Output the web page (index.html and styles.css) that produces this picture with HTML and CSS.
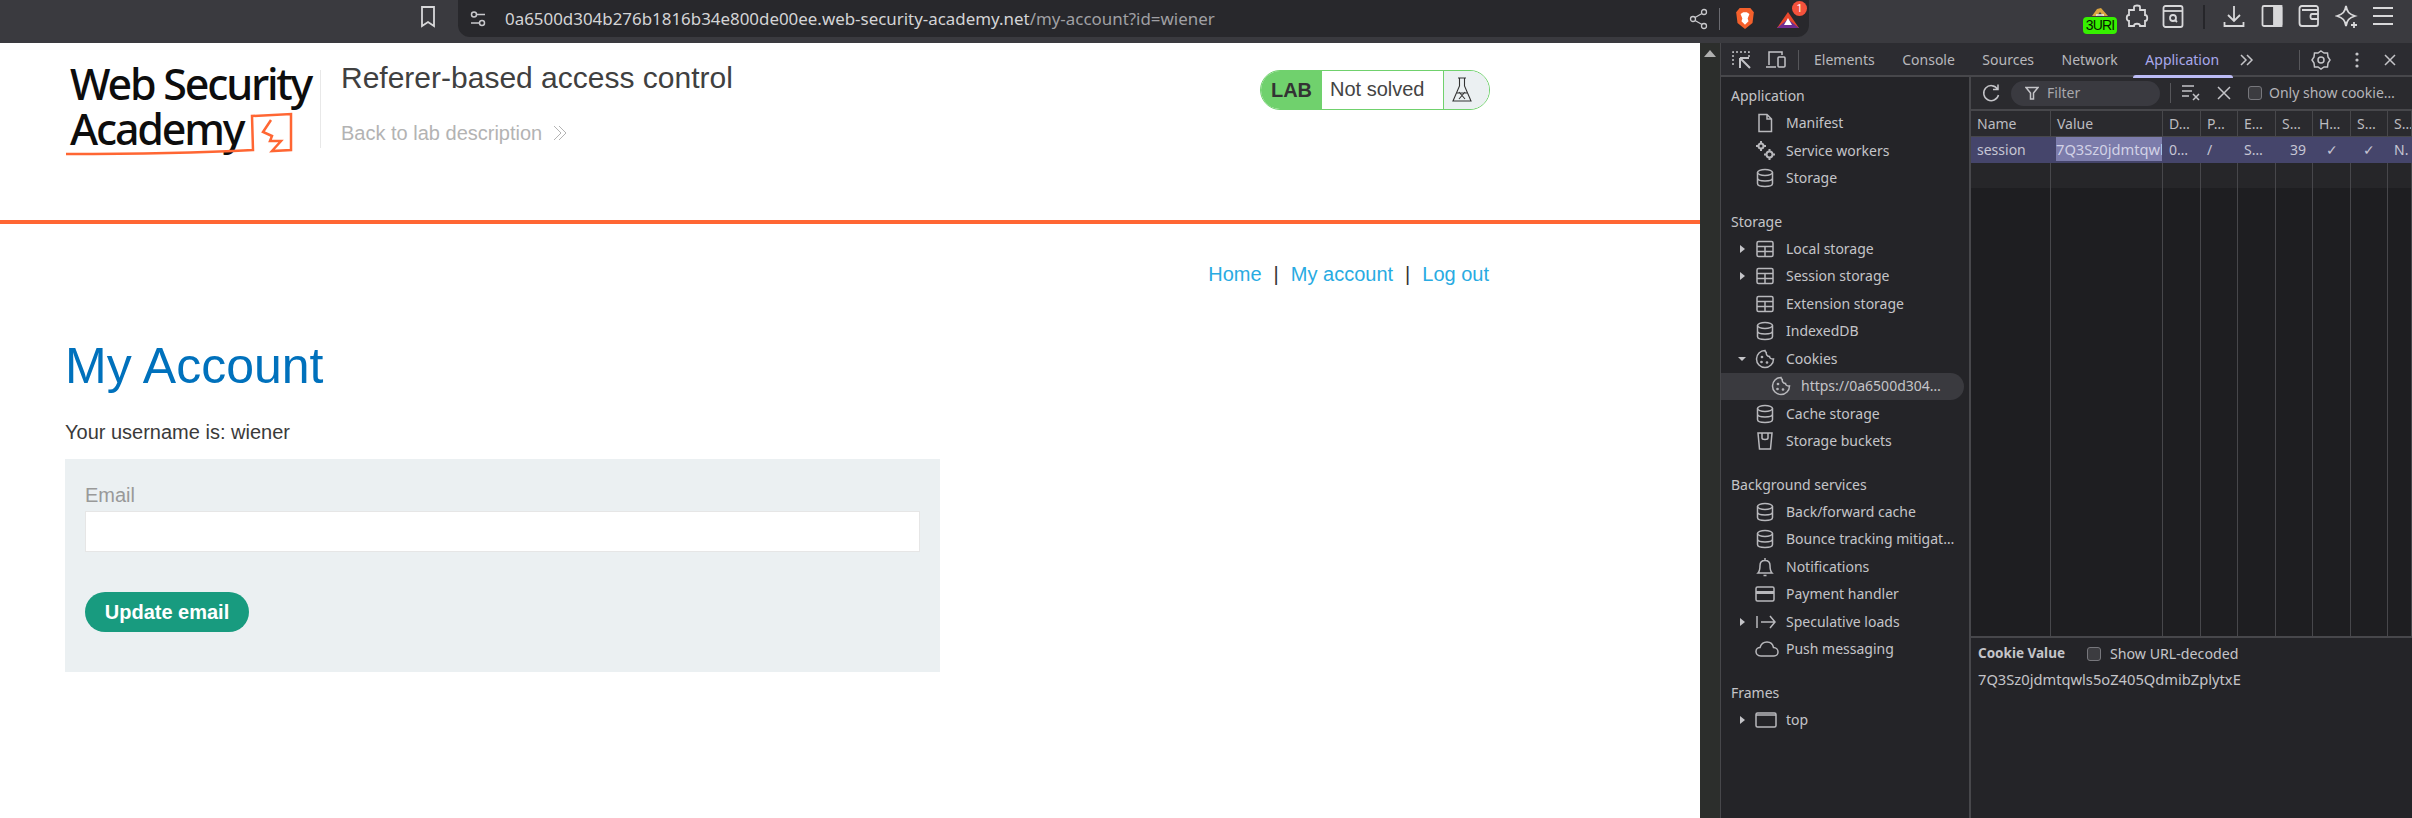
FILE: index.html
```html
<!DOCTYPE html>
<html lang="en">
<head>
<meta charset="utf-8">
<title>Referer-based access control</title>
<link rel="stylesheet" href="styles.css">
</head>
<body>
<svg class="sprite" width="0" height="0" aria-hidden="true">
  <symbol id="i-db" viewBox="0 0 20 20"><ellipse cx="10" cy="4.5" rx="7.5" ry="3"/><path d="M2.5 4.500V15.500C2.500 17.200 5.500 18.500 10 18.500S17.500 17.200 17.500 15.500V4.500M2.500 10C2.500 11.700 5.500 13 10 13S17.500 11.700 17.500 10"/></symbol>
  <symbol id="i-grid" viewBox="0 0 20 20"><rect x="2" y="2.500" width="16" height="15" rx="1.500"/><path d="M2 7.500H18M2 12.500H18M10 7.500V17.500"/></symbol>
  <symbol id="i-cookie" viewBox="0 0 20 20"><path d="M10 1.500C5.300 1.500 1.500 5.300 1.500 10S5.300 18.500 10 18.500 18.500 14.700 18.500 10C16.500 10.500 14.500 9 14.500 7.500 12.500 7.500 10.800 5.500 11.300 3.500 10.500 3 10 2.300 10 1.500Z"/><circle cx="7" cy="8" r="0.600"/><circle cx="6.500" cy="13" r="0.600"/><circle cx="12" cy="13.500" r="0.600"/></symbol>
  <symbol id="i-tri-r" viewBox="0 0 10 10"><path d="M3 1L8 5L3 9Z" class="solid"/></symbol>
  <symbol id="i-tri-d" viewBox="0 0 10 10"><path d="M1 3H9L5 7Z" class="solid"/></symbol>
</svg>

<header class="browser-bar">
  <svg class="bookmark" width="18" height="24" viewBox="0 0 18 24"><path d="M3 2H15V21L9 17L3 21Z"/></svg>
  <div class="url-box">
    <svg class="tune" width="18" height="18" viewBox="0 0 18 18"><circle cx="5" cy="4.500" r="2.500"/><path d="M8 4.500H16M2 13H10"/><circle cx="13" cy="13" r="2.500"/></svg>
    <div class="url"><span class="url-host">0a6500d304b276b1816b34e800de00ee.web-security-academy.net</span>/my-account?id=wiener</div>
    <svg class="share" width="20" height="22" viewBox="0 0 20 22"><circle cx="15" cy="4" r="2.500"/><circle cx="4" cy="11" r="2.500"/><circle cx="15" cy="18" r="2.500"/><path d="M6 9.500L13 5.500M6 12.500L13 16.500"/></svg>
    <span class="url-sep"></span>
    <svg class="brave" width="20" height="23" viewBox="0 0 22 26"><path d="M5 1H17L21 6L19.500 18L11 25L2.500 18L1 6Z" fill="#f4602c"/><path d="M6 8L9 6H13L16 8L14 13L15 16L11 20L7 16L8 13Z" fill="#fff"/></svg>
    <div class="rewards">
      <svg width="24" height="16" viewBox="0 0 24 16"><path d="M12 0L23 16H1Z" fill="#e8472c"/><path d="M12 7L23 16H1Z" fill="#6f2c91"/><path d="M12 6L16 13H8Z" fill="#fff"/></svg>
      <span class="rewards-badge">1</span>
    </div>
  </div>
  <div class="ext-burp">
    <svg class="ext-bird" width="18" height="10" viewBox="0 0 18 10"><path d="M1 9L6 2L10 1L17 9H12L9 5L6 9Z" fill="#d9a441"/><path d="M5 8H13" stroke="#f2f2f2" stroke-width="1.500"/></svg>
    <span class="ext-3uri">3URI</span>
  </div>
  <svg class="tb-icon puzzle" width="24" height="26" viewBox="0 0 24 26"><path d="M9 3C9 1 15 1 15 3V6H20V11C23 11 23 17 20 17V22H15C15 19 9 19 9 22H4V17C1 17 1 11 4 11V6H9Z"/></svg>
  <svg class="tb-icon reader" width="22" height="26" viewBox="0 0 22 26"><rect x="1.500" y="2" width="19" height="21" rx="2"/><path d="M1.500 7H20.500"/><circle cx="11" cy="14" r="3"/><path d="M13 16L15 18"/></svg>
  <span class="tb-sep"></span>
  <svg class="tb-icon download" width="22" height="26" viewBox="0 0 22 26"><path d="M11 2V17M5 11L11 17L17 11M1.500 18V22H20.500V18"/></svg>
  <svg class="tb-icon panel" width="22" height="24" viewBox="0 0 22 24"><rect x="1.500" y="2" width="19" height="20" rx="1.500"/><rect x="13" y="2" width="7.500" height="20" class="fill"/></svg>
  <svg class="tb-icon wallet" width="22" height="24" viewBox="0 0 22 24"><path d="M20 6V4C20 3 19 2 18 2H4C2.500 2 1.500 3 1.500 4.500V19C1.500 21 2.500 22 4 22H18C19 22 20 21 20 20V6H4"/><path d="M20.500 10H14C12 10 12 15 14 15H20.500"/></svg>
  <svg class="tb-icon sparkle" width="24" height="26" viewBox="0 0 24 26"><path d="M11 2C12 8 14 10 20 12C14 14 12 16 11 22C10 16 8 14 2 12C8 10 10 8 11 2Z"/><path d="M19 18V24M16 21H22"/></svg>
  <svg class="tb-icon menu" width="22" height="24" viewBox="0 0 22 24"><path d="M1 4H21M1 12H21M1 20H21"/></svg>
</header>

<div class="workspace">
  <main class="page">
    <section class="lab-header">
      <div class="logo">
        <div class="logo-text">Web Security</div>
        <div class="logo-text">Academy</div>
        <svg class="logo-mark" width="240" height="50" viewBox="0 0 240 50"><path d="M1 42C60 42 130 41 188 38L187 4L226 2L226 38L207 39L216 29H205L207 24L198 20L206 8" fill="none" stroke="#f63" stroke-width="2.500"/></svg>
      </div>
      <div class="lab-title">
        <h2>Referer-based access control</h2>
        <a class="back-link">Back to lab description <svg width="18" height="18" viewBox="0 0 18 18"><path d="M3 2L10 9L3 16M8 2L15 9L8 16"/></svg></a>
      </div>
      <div class="lab-status">
        <span class="lab-tag">LAB</span>
        <span class="lab-state">Not solved</span>
        <span class="lab-icon"><svg width="22" height="28" viewBox="0 0 22 28"><path d="M7 2H15M8.500 2V10L2 25H20L13.500 10V2M6 17H16M8 16L14 23M14 16L8 23"/></svg></span>
      </div>
    </section>
    <nav class="site-nav"><a>Home</a><span>|</span><a>My account</a><span>|</span><a>Log out</a></nav>
    <h1>My Account</h1>
    <p class="username">Your username is: wiener</p>
    <form class="email-form">
      <label>Email</label>
      <input type="text">
      <button type="button">Update email</button>
    </form>
  </main>

  <div class="page-scrollbar"><span class="scroll-up"></span></div>

  <aside class="devtools">
    <div class="dt-toolbar">
      <svg class="dt-ic inspect" width="20" height="20" viewBox="0 0 20 20"><path d="M1 15V2H17V7" stroke-dasharray="2 2"/><path d="M8 8V18M8 8H17M8 8L18 18" class="thick"/></svg>
      <svg class="dt-ic device" width="22" height="20" viewBox="0 0 22 20"><path d="M4 15V2H17V5M1 17H11"/><rect x="13" y="7" width="7" height="10" rx="1"/></svg>
      <span class="dt-sep first"></span>
      <span class="dt-tab">Elements</span>
      <span class="dt-tab">Console</span>
      <span class="dt-tab">Sources</span>
      <span class="dt-tab">Network</span>
      <span class="dt-tab active">Application</span>
      <svg class="dt-ic more" width="16" height="14" viewBox="0 0 16 14"><path d="M2 2L7 7L2 12M8 2L13 7L8 12"/></svg>
      <span class="dt-sep second"></span>
      <svg class="dt-ic gear" width="20" height="20" viewBox="0 0 20 20"><path d="M10 1L13 3L16.500 3L17 7L19 10L17 13L16.500 17L13 17L10 19L7 17L3.500 17L3 13L1 10L3 7L3.500 3L7 3Z"/><circle cx="10" cy="10" r="3"/></svg>
      <svg class="dt-ic dots" width="6" height="18" viewBox="0 0 6 18"><circle cx="3" cy="3" r="1.600"/><circle cx="3" cy="9" r="1.600"/><circle cx="3" cy="15" r="1.600"/></svg>
      <svg class="dt-ic close" width="14" height="14" viewBox="0 0 14 14"><path d="M2 2L12 12M12 2L2 12"/></svg>
    </div>
    <div class="dt-body">
      <nav class="dt-side">
        <div class="side-head">Application</div>
        <div class="side-item"><span class="arrow"></span><svg class="sic" width="20" height="20" viewBox="0 0 20 20"><path d="M4 1.500H12L16.500 6V18.500H4ZM12 1.500V6H16.500"/></svg><span>Manifest</span></div>
        <div class="side-item"><span class="arrow"></span><svg class="sic cogs" width="22" height="22" viewBox="0 0 22 22"><circle cx="6" cy="6" r="2.500"/><circle cx="14.500" cy="14.500" r="3"/><path d="M6 1V3M6 9V11M1 6H3M9 6H11M14.500 9V11M14.500 18V20M9 14.500H11M18 14.500H20" class="thick"/></svg><span>Service workers</span></div>
        <div class="side-item"><span class="arrow"></span><svg class="sic" width="20" height="20"><use href="#i-db"/></svg><span>Storage</span></div>

        <div class="side-head spaced">Storage</div>
        <div class="side-item"><svg class="arrow" width="10" height="10"><use href="#i-tri-r"/></svg><svg class="sic" width="20" height="20"><use href="#i-grid"/></svg><span>Local storage</span></div>
        <div class="side-item"><svg class="arrow" width="10" height="10"><use href="#i-tri-r"/></svg><svg class="sic" width="20" height="20"><use href="#i-grid"/></svg><span>Session storage</span></div>
        <div class="side-item"><span class="arrow"></span><svg class="sic" width="20" height="20"><use href="#i-grid"/></svg><span>Extension storage</span></div>
        <div class="side-item"><span class="arrow"></span><svg class="sic" width="20" height="20"><use href="#i-db"/></svg><span>IndexedDB</span></div>
        <div class="side-item"><svg class="arrow" width="10" height="10"><use href="#i-tri-d"/></svg><svg class="sic" width="20" height="20"><use href="#i-cookie"/></svg><span>Cookies</span></div>
        <div class="side-item child"><svg class="sic" width="20" height="20"><use href="#i-cookie"/></svg><span>https://0a6500d304…</span></div>
        <div class="side-item"><span class="arrow"></span><svg class="sic" width="20" height="20"><use href="#i-db"/></svg><span>Cache storage</span></div>
        <div class="side-item"><span class="arrow"></span><svg class="sic" width="20" height="20" viewBox="0 0 20 20"><path d="M3 2H17L15.500 18H4.500ZM7 2V7C7 9 13 9 13 7V2"/></svg><span>Storage buckets</span></div>

        <div class="side-head spaced">Background services</div>
        <div class="side-item"><span class="arrow"></span><svg class="sic" width="20" height="20"><use href="#i-db"/></svg><span>Back/forward cache</span></div>
        <div class="side-item"><span class="arrow"></span><svg class="sic" width="20" height="20"><use href="#i-db"/></svg><span>Bounce tracking mitigat…</span></div>
        <div class="side-item"><span class="arrow"></span><svg class="sic" width="20" height="20" viewBox="0 0 20 20"><path d="M3 16C5 14 5 11 5 8.500C5 5.500 7 3.500 10 3.500S15 5.500 15 8.500C15 11 15 14 17 16ZM10 1V3.500M8.500 18.500H11.500"/></svg><span>Notifications</span></div>
        <div class="side-item"><span class="arrow"></span><svg class="sic" width="20" height="20" viewBox="0 0 20 20"><rect x="1" y="3" width="18" height="14" rx="1.500"/><path d="M1 8.500H19" class="wide"/></svg><span>Payment handler</span></div>
        <div class="side-item"><svg class="arrow" width="10" height="10"><use href="#i-tri-r"/></svg><svg class="sic" width="22" height="20" viewBox="0 0 22 20"><path d="M2 4V16M6 10H20M15 4L20 10L15 16"/></svg><span>Speculative loads</span></div>
        <div class="side-item"><span class="arrow"></span><svg class="sic" width="24" height="20" viewBox="0 0 24 20"><path d="M6 17C2 17 1 14 1 12.500C1 10 3 8.500 5 8.500C6 5 9 3 12 3C16 3 18 6 18.500 8.500C21 8.500 23 10.500 23 13C23 15 21.500 17 19 17Z"/></svg><span>Push messaging</span></div>

        <div class="side-head spaced">Frames</div>
        <div class="side-item"><svg class="arrow" width="10" height="10"><use href="#i-tri-r"/></svg><svg class="sic" width="22" height="20" viewBox="0 0 22 20"><rect x="1" y="3" width="20" height="14" rx="1.500"/><path d="M1 5H21"/></svg><span>top</span></div>
      </nav>

      <section class="dt-main">
        <div class="cookie-bar">
          <svg class="dt-ic refresh" width="20" height="20" viewBox="0 0 20 20"><path d="M16.500 6A7.500 7.500 0 1 0 17.500 12M17 1.500V6.500H12"/></svg>
          <div class="filter"><svg class="dt-ic" width="14" height="14" viewBox="0 0 14 14"><path d="M1 1.500H13L8.500 7V13H5.500V7Z"/></svg><span>Filter</span></div>
          <span class="dt-sep third"></span>
          <svg class="dt-ic clear" width="20" height="18" viewBox="0 0 20 18"><path d="M1 2H13M1 7H11M1 12H8M12 10L18 16M18 10L12 16"/></svg>
          <svg class="dt-ic close x2" width="14" height="14" viewBox="0 0 14 14"><path d="M1 1L13 13M13 1L1 13"/></svg>
          <span class="check"></span>
          <span class="only">Only show cookie…</span>
        </div>
        <div class="cookie-table">
          <div class="th">Name</div><div class="th">Value</div><div class="th">D…</div><div class="th">P…</div><div class="th">E…</div><div class="th">S…</div><div class="th">H…</div><div class="th">S…</div><div class="th">S…</div>
          <div class="td sel">session</div><div class="td sel val"><span class="hl">7Q3Sz0jdmtqwl</span></div><div class="td sel">0…</div><div class="td sel">/</div><div class="td sel">S…</div><div class="td sel num">39</div><div class="td sel ctr">✓</div><div class="td sel ctr">✓</div><div class="td sel">N.</div>
          <div class="td alt"></div><div class="td alt"></div><div class="td alt"></div><div class="td alt"></div><div class="td alt"></div><div class="td alt"></div><div class="td alt"></div><div class="td alt"></div><div class="td alt"></div>
          <div class="td"></div><div class="td"></div><div class="td"></div><div class="td"></div><div class="td"></div><div class="td"></div><div class="td"></div><div class="td"></div><div class="td"></div>
        </div>
        <div class="cookie-detail">
          <div class="detail-head"><strong>Cookie Value</strong><span class="check"></span><span class="decoded">Show URL-decoded</span></div>
          <div class="detail-value">7Q3Sz0jdmtqwls5oZ405QdmibZplytxE</div>
        </div>
      </section>
    </div>
  </aside>
</div>
</body>
</html>
```

FILE: styles.css
```css
* { box-sizing: border-box; }
html, body { margin: 0; height: 100%; }
body {
  width: 2412px;
  height: 818px;
  overflow: hidden;
  display: flex;
  flex-direction: column;
  font-family: "Liberation Sans", Arial, sans-serif;
  background: #fff;
}
.sprite { position: absolute; }

/* browser chrome */
.browser-bar {
  height: 43px;
  flex: none;
  display: flex;
  align-items: flex-start;
  background: #3a3a3f;
  padding-left: 419px;
}
.browser-bar svg { fill: none; stroke: #d8d8da; stroke-width: 1.800; }
.bookmark { margin: 5px 21px 0 0; flex: none; }
.url-box {
  width: 1351px;
  height: 37px;
  flex: none;
  display: flex;
  align-items: center;
  background: #28282c;
  border-radius: 0 0 12px 12px;
  padding-left: 11px;
}
.browser-bar .tune { stroke: #c8c8cc; stroke-width: 1.500; flex: none; }
.url {
  margin-left: 18px;
  width: 1184px;
  flex: none;
  font: 16.920px "Noto Sans", Roboto, sans-serif;
  color: #a0a0a4;
  white-space: nowrap;
}
.url-host { color: #d4d4d6; }
.browser-bar .share { stroke: #c8c8cc; stroke-width: 1.300; flex: none; }
.url-sep { width: 1px; height: 22px; background: #6a6a70; margin: 0 15px 0 10px; flex: none; }
.browser-bar .brave, .browser-bar .rewards svg { stroke: none; flex: none; }
.rewards { position: relative; margin: 2px 0 0 21px; height: 16px; }
.rewards svg { display: block; }
.rewards-badge {
  position: absolute;
  left: 16px;
  top: -11px;
  width: 15px;
  height: 15px;
  border-radius: 50%;
  background: #f4523c;
  color: #fff;
  font: 10px/15px Roboto, sans-serif;
  text-align: center;
}
.ext-burp {
  margin-left: 274px;
  width: 34px;
  flex: none;
  display: flex;
  flex-direction: column;
  align-items: center;
  padding-top: 7px;
}
.browser-bar .ext-bird { stroke: none; }
.ext-3uri {
  width: 34px;
  height: 17px;
  background: #36f000;
  border-radius: 4px;
  color: #071a00;
  font: 14px/17px "Liberation Sans Narrow", "Liberation Sans", sans-serif;
  text-align: center;
  letter-spacing: -0.800px;
  overflow: hidden;
  white-space: nowrap;
}
.tb-icon { flex: none; margin-top: 4px; }
.puzzle { margin-left: 8px; }
.reader { margin-left: 13px; }
.tb-sep { width: 2px; height: 24px; background: #26262a; margin: 5px 0 0 19px; flex: none; }
.download { margin-left: 18px; }
.panel { margin-left: 16px; }
.browser-bar .panel .fill { fill: #d8d8da; }
.wallet { margin-left: 15px; }
.sparkle { margin-left: 15px; }
.menu { margin-left: 13px; }

.workspace { flex: 1; display: flex; min-height: 0; }

/* lab page */
.page { width: 1700px; flex: none; background: #fff; color: #3a3a3a; padding-left: 65px; }
.lab-header {
  height: 181px;
  margin-left: -65px;
  border-bottom: 4px solid #f63;
  display: flex;
  align-items: flex-start;
  padding-left: 70px;
}
.logo {
  position: relative;
  width: 251px;
  height: 78px;
  margin-top: 27px;
  flex: none;
  border-right: 1px solid #e8e8e8;
}
.logo-text {
  font: 500 43px/45px "Noto Sans", sans-serif;
  letter-spacing: -2.200px;
  color: #0d0d0d;
  white-space: nowrap;
  position: relative;
  top: -9px;
}
.logo-mark { position: absolute; left: -5px; top: 42px; }
.lab-title { margin-left: 20px; width: 919px; flex: none; }
.lab-title h2 { margin: 17px 0 0; font-size: 30px; line-height: 36px; font-weight: 400; color: #404040; }
.back-link { display: flex; align-items: center; gap: 9px; margin-top: 25px; font-size: 20px; line-height: 24px; color: #b3b3b3; }
.back-link svg { fill: none; stroke: #b3b3b3; stroke-width: 1; }
.lab-status {
  width: 230px;
  height: 40px;
  margin-top: 27px;
  flex: none;
  display: flex;
  border: 1px solid #70d16d;
  border-radius: 20px;
  overflow: hidden;
  font-size: 20px;
}
.lab-tag { width: 61px; background: #70d16d; font-weight: 700; line-height: 38px; text-align: center; color: #333; }
.lab-state { width: 122px; line-height: 36px; padding-left: 8px; color: #444; border-right: 1px solid #70d16d; }
.lab-icon { flex: 1; background: #ebf0f2; display: flex; align-items: center; padding-left: 7px; }
.lab-icon svg { fill: none; stroke: #333; stroke-width: 1.100; }
.site-nav {
  display: flex;
  justify-content: flex-end;
  gap: 12px;
  width: 1424px;
  margin-top: 38px;
  font-size: 20px;
  line-height: 24px;
}
.site-nav a { color: #29abe2; }
.site-nav span { color: #333; }
h1 { margin: 50px 0 0; font-size: 50px; line-height: 60px; font-weight: 400; color: #0071bc; }
.username { margin: 24px 0 0; font-size: 20px; line-height: 24px; color: #3a3a3a; }
.email-form {
  width: 875px;
  height: 213px;
  margin-top: 15px;
  padding: 24px 20px 0;
  background: #ebf0f2;
  display: flex;
  flex-direction: column;
  align-items: flex-start;
}
.email-form label { font-size: 20px; line-height: 24px; color: #999; }
.email-form input { width: 835px; height: 41px; margin-top: 4px; border: 1px solid #e6e6e6; background: #fff; padding: 0; }
.email-form button {
  width: 164px;
  height: 40px;
  margin-top: 40px;
  border: 0;
  border-radius: 20px;
  background: #189b7f;
  color: #fff;
  font: 700 20px "Liberation Sans", Arial, sans-serif;
  padding: 0;
}

.page-scrollbar { width: 20px; flex: none; background: #2c2e2c; padding: 7px 0 0 4px; }
.scroll-up {
  display: block;
  width: 0;
  height: 0;
  border-left: 6px solid transparent;
  border-right: 6px solid transparent;
  border-bottom: 7px solid #b0b0b0;
}

/* devtools */
.devtools {
  flex: 1;
  min-width: 0;
  display: flex;
  flex-direction: column;
  background: #242428;
  color: #c4c4c8;
  font: 14px/1 "Noto Sans", sans-serif;
  border-left: 1px solid #47474b;
}
.dt-toolbar {
  height: 34px;
  flex: none;
  display: flex;
  align-items: center;
  background: #2c2c31;
  border-bottom: 2px solid #47474b;
  padding: 1px 0 0 11px;
  position: relative;
}
.dt-ic { fill: none; stroke: #c4c4c8; stroke-width: 1.500; flex: none; }
.dt-ic .thick { stroke-width: 2; }
.device { margin-left: 13px; }
.dt-sep { width: 1px; height: 20px; background: #56565a; flex: none; }
.dt-sep.first { margin: 0 15px 0 11px; }
.dt-tab { margin-right: 27.500px; white-space: nowrap; color: #b8b8bc; }
.dt-tab.active { color: #a9a9ec; position: relative; margin-right: 20px; }
.dt-tab.active::after {
  content: "";
  position: absolute;
  left: -12px;
  right: -14px;
  bottom: -11px;
  height: 3px;
  background: #bcbcf6;
  border-radius: 3px 3px 0 0;
}
.more { margin-right: 44px; }
.gear { margin-left: 11px; }
.dots { margin-left: 23px; }
.close { margin-left: 23px; }
.dots circle { fill: #c4c4c8; stroke: none; }
.dt-body { flex: 1; min-height: 0; display: flex; }
.dt-side { width: 250px; flex: none; padding-top: 5px; border-right: 2px solid #47474b; }
.side-head { height: 27.500px; line-height: 27.500px; padding-left: 10px; }
.side-head.spaced { margin-top: 15.500px; }
.side-item { height: 27.500px; display: flex; align-items: center; white-space: nowrap; position: relative; }
.arrow { width: 10px; height: 10px; margin-left: 16px; flex: none; }
.solid { fill: #c4c4c8; }
.sic { fill: none; stroke: #b8b8bc; stroke-width: 1.500; flex: none; position: absolute; margin-left: 34px; }
.sic.cogs { stroke-width: 2; }
.sic + span { margin-left: 39px; }
.side-item.child { background: #3a3a3f; border-radius: 0 14px 14px 0; margin-right: 5px; }
.side-item.child .sic { margin-left: 50px; }
.side-item.child span { margin-left: 80px; }
.sic .wide { stroke-width: 3; }
.dt-main { flex: 1; min-width: 0; display: flex; flex-direction: column; }
.cookie-bar {
  height: 34px;
  flex: none;
  display: flex;
  align-items: center;
  padding-left: 10px;
  border-bottom: 2px solid #47474b;
  background: #2a2a2e;
}
.filter {
  width: 149px;
  height: 25px;
  margin-left: 10px;
  border-radius: 13px;
  background: #3a3a40;
  display: flex;
  align-items: center;
  gap: 8px;
  padding-left: 14px;
  color: #a8a8ac;
  flex: none;
}
.dt-sep.third { margin-left: 10px; }
.clear { margin-left: 10px; }
.x2 { margin-left: 16px; }
.check {
  width: 14px;
  height: 14px;
  flex: none;
  border: 1px solid #77777c;
  border-radius: 3px;
  background: #3c3c40;
}
.cookie-bar .check { margin-left: 17px; }
.only { margin-left: 7px; white-space: nowrap; color: #b4b4b8; }
.cookie-table {
  flex: 1;
  min-height: 0;
  display: grid;
  grid-template-columns: 80px 112px 38px 37px 38px 37px 38px 37px 1fr;
  grid-template-rows: 26px 26px 25px 1fr;
  background: #1e1e21;
}
.th, .td { border-right: 1px solid #47474b; padding-left: 6px; white-space: nowrap; overflow: hidden; }
.th { line-height: 25px; background: #2a2a2e; border-bottom: 1px solid #47474b; color: #bcbcc0; }
.td { line-height: 26px; }
.td.alt { background: #262629; }
.td.sel { background: #45456b; color: #c6c6d4; border-right-color: #45456b; }
.td.val { padding-left: 5px; }
.hl { background: #7c7cab; color: #d2d2e6; display: block; line-height: 24px; font-size: 14.700px; }
.td.num { text-align: right; padding-right: 6px; }
.td.ctr { text-align: center; padding-left: 0; }
.cookie-detail { height: 182px; flex: none; border-top: 2px solid #47474b; padding: 8px 7px 0; }
.detail-head { display: flex; align-items: center; height: 16px; }
.detail-head strong { font-weight: 700; font-size: 13.500px; color: #c4c4c8; }
.detail-head .check { margin: 0 9px 0 22px; }
.decoded { font-size: 14.200px; }
.detail-value { margin-top: 10px; font-size: 14.700px; }
```
